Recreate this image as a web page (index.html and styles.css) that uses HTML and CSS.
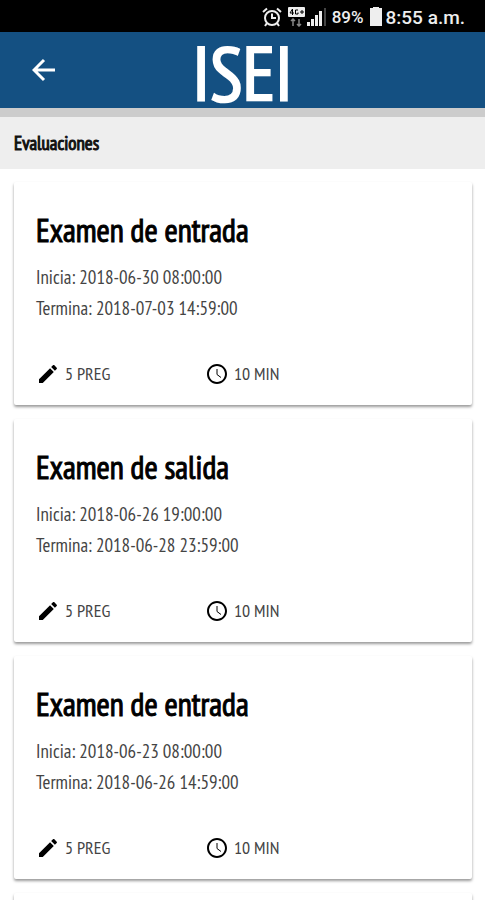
FILE: index.html
```html
<!DOCTYPE html>
<html lang="es">
<head>
  <meta charset="UTF-8" />
  <meta name="viewport" content="width=device-width, initial-scale=1.0"/>
  <title>ISEI - Evaluaciones</title>
  <link rel="stylesheet" href="styles.css">
</head>
<body>

  <!-- shared icons -->
  <svg class="sprite" aria-hidden="true">
    <symbol id="pencil" viewBox="0 0 24 24">
      <path d="M3 17.25V21h3.75L17.81 9.94l-3.75-3.75L3 17.25zM20.71 7.04c.39-.39.39-1.02 0-1.41l-2.34-2.34c-.39-.39-1.02-.39-1.41 0l-1.83 1.83 3.75 3.75 1.83-1.83z"/>
    </symbol>
    <symbol id="clock" viewBox="0 0 24 24">
      <path d="M11.99 2C6.47 2 2 6.48 2 12s4.47 10 9.99 10C17.52 22 22 17.52 22 12S17.52 2 11.99 2zM12 20c-4.42 0-8-3.58-8-8s3.58-8 8-8 8 3.58 8 8-3.58 8-8 8z"/>
      <path d="M12 7v5.500l4 3" fill="none" stroke="currentColor"/>
    </symbol>
  </svg>

  <div class="status-bar">
    <svg class="alarm" viewBox="0 0 20 20">
      <g fill="none" stroke="currentColor" stroke-width="2">
        <circle cx="10" cy="11" r="7"/>
        <path d="M10 6.500V11h4M1 5l4-3.500M19 5l-4-3.500M5 16l-2 3M15 16l2 3"/>
      </g>
    </svg>
    <svg class="network" viewBox="0 0 17 20">
      <rect width="17" height="10" rx="1"/>
      <path d="M4.500 2L2 6h4M4.500 2v6M10 3H7.500v4H10V5.500M12 5h4M14 3v4" fill="none" stroke="#000"/>
      <path d="M5 19v-7M3 14l2-2 2 2M11 12v7M9 17l2 2 2-2" fill="none" stroke="#888" stroke-width="1.500"/>
    </svg>
    <svg class="signal" viewBox="0 0 20 20">
      <path d="M0 15h3v4H0zM4 12h3v7H4zM8 8h3v11H8zM12 4h3v15h-3z"/>
      <path d="M17 1h2v18h-2z" fill="#444"/>
    </svg>
    <span class="battery-level">89%</span>
    <svg class="battery" viewBox="0 0 12 20">
      <path d="M3 0h6v1h3v18H0V1h3z"/>
    </svg>
    <span class="time">8:55 a.m.</span>
  </div>

  <header class="toolbar">
    <button class="back" aria-label="Volver">
      <svg viewBox="0 0 24 24"><path d="M23 12H3M12 2L2 12l10 10" fill="none" stroke="currentColor" stroke-width="3"/></svg>
    </button>
    <div class="logo">ISEI</div>
  </header>

  <h1 class="page-title">Evaluaciones</h1>

  <main class="exams">
    <article class="card">
      <h2>Examen de entrada</h2>
      <p>Inicia: 2018-06-30 08:00:00</p>
      <p>Termina: 2018-07-03 14:59:00</p>
      <div class="info">
        <span><svg><use href="#pencil"/></svg>5 PREG</span>
        <span><svg><use href="#clock"/></svg>10 MIN</span>
      </div>
    </article>

    <article class="card">
      <h2>Examen de salida</h2>
      <p>Inicia: 2018-06-26 19:00:00</p>
      <p>Termina: 2018-06-28 23:59:00</p>
      <div class="info">
        <span><svg><use href="#pencil"/></svg>5 PREG</span>
        <span><svg><use href="#clock"/></svg>10 MIN</span>
      </div>
    </article>

    <article class="card">
      <h2>Examen de entrada</h2>
      <p>Inicia: 2018-06-23 08:00:00</p>
      <p>Termina: 2018-06-26 14:59:00</p>
      <div class="info">
        <span><svg><use href="#pencil"/></svg>5 PREG</span>
        <span><svg><use href="#clock"/></svg>10 MIN</span>
      </div>
    </article>

    <article class="card next"></article>
  </main>

</body>
</html>
```
FILE: styles.css
```css
* {
  box-sizing: border-box;
}

body {
  margin: 0;
  height: 100vh;
  display: flex;
  flex-direction: column;
  overflow: hidden;
  background-color: #fff;
  color: #000;
  font-family: "PT Sans Narrow", "Liberation Sans Narrow", "Noto Sans", sans-serif;
}

h1, h2, p {
  margin: 0;
}

svg {
  fill: currentColor;
}

.sprite {
  position: absolute;
  width: 0;
  height: 0;
}

.status-bar {
  flex: none;
  display: flex;
  align-items: center;
  justify-content: flex-end;
  height: 32px;
  padding: 2px 20px 0 0;
  background-color: #000;
  color: #eee;
  font-family: Roboto, sans-serif;
  font-size: 17px;
  font-weight: 500;
}

.status-bar svg {
  height: 20px;
}

.alarm {
  width: 20px;
  margin-right: 6px;
}

.network {
  width: 17px;
  margin-right: 2px;
}

.signal {
  width: 20px;
  margin-right: 5px;
}

.battery {
  width: 12px;
  margin: 0 4px 0 6px;
}

.time {
  font-size: 19px;
}

.toolbar {
  flex: none;
  display: grid;
  grid-template-columns: 1fr auto 1fr;
  align-items: center;
  height: 76px;
  background-color: #145082;
  color: #fff;
}

.back {
  justify-self: start;
  display: flex;
  margin-left: 22px;
  padding: 10px;
  border: none;
  background: none;
  color: #fff;
  cursor: pointer;
}

.back svg {
  width: 24px;
  height: 24px;
}

.logo {
  padding-top: 4px;
  font-size: 76px;
  line-height: 72px;
  -webkit-text-stroke: 2px #fff;
}

.page-title {
  flex: none;
  padding: 0 14px;
  border-top: 9px solid #ccc;
  background-color: #eee;
  color: #111;
  font-size: 19px;
  font-weight: 400;
  line-height: 52px;
  -webkit-text-stroke: 1px #111;
}

.exams {
  display: flex;
  flex-direction: column;
  gap: 14px;
  padding: 13px 13px 0 14px;
}

.card {
  flex: none;
  padding: 27px 22px 18px;
  border-radius: 2px;
  background-color: #fff;
  box-shadow: 0 2px 3px rgba(0, 0, 0, 0.4);
}

.card h2 {
  margin-bottom: 11px;
  font-size: 32px;
  font-weight: 400;
  line-height: 42px;
  -webkit-text-stroke: 1px #000;
}

.card p {
  color: #444;
  font-size: 19px;
  line-height: 31px;
}

.info {
  display: grid;
  grid-template-columns: 169px 1fr;
  margin-top: 37px;
  color: #444;
  font-size: 18px;
  line-height: 26px;
}

.info span {
  display: flex;
  align-items: center;
  gap: 5px;
}

.info svg {
  width: 24px;
  height: 24px;
  color: #000;
}

.card.next {
  height: 223px;
}
```
